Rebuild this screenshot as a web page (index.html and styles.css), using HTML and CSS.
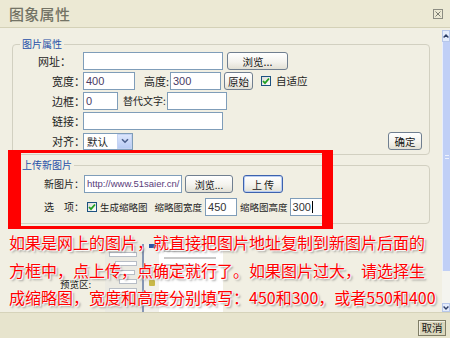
FILE: index.html
```html
<!DOCTYPE html>
<html lang="zh-CN">
<head>
<meta charset="utf-8">
<title>图象属性</title>
<link rel="stylesheet" href="styles.css">
</head>
<body>
<div class="dialog">
  <header class="titlebar">
    <span class="title">图象属性</span>
    <span class="close"><svg width="10" height="10" viewBox="0 0 10 10"><rect x="0.5" y="0.5" width="9" height="9" fill="none" stroke="#8c8c82"/><path d="M2.5 2.5 L7.5 7.5 M7.5 2.5 L2.5 7.5" stroke="#7c7c72" stroke-width="1"/></svg></span>
  </header>
  <div class="main">
    <div class="content">
      <fieldset class="group g1">
        <legend>图片属性</legend>
        <div class="rows">
          <div class="row">
            <span class="lbl lbl-url">网址：</span>
            <span class="input w-url"></span>
            <span class="btn b-browse">浏览...</span>
          </div>
          <div class="row">
            <span class="lbl">宽度：</span>
            <span class="input w-400">400</span>
            <span class="txt t-h">高度:</span>
            <span class="input w-300">300</span>
            <span class="btn b-orig">原始</span>
            <span class="cb cb-auto"><svg width="8" height="8" viewBox="0 0 8 8"><path d="M1 4 L3 6.2 L7 1.5" fill="none" stroke="#21a121" stroke-width="1.8"/></svg></span>
            <span class="txt t-auto">自适应</span>
          </div>
          <div class="row">
            <span class="lbl">边框：</span>
            <span class="input w-0">0</span>
            <span class="txt t-alt">替代文字:</span>
            <span class="input w-alt"></span>
          </div>
          <div class="row">
            <span class="lbl">链接：</span>
            <span class="input w-url"></span>
          </div>
          <div class="row">
            <span class="lbl">对齐：</span>
            <span class="select"><span class="sel-val">默认</span><span class="sel-arr"><svg width="8" height="6" viewBox="0 0 8 6"><path d="M1 1.2 L4 4.2 L7 1.2" fill="none" stroke="#4a5f8c" stroke-width="1.6"/></svg></span></span>
            <span class="btn b-ok">确定</span>
          </div>
        </div>
      </fieldset>
      <fieldset class="group g2">
        <legend>上传新图片</legend>
        <div class="rows rows2">
          <div class="row">
            <span class="lbl2">新图片：</span>
            <span class="input w-file">http://www.51saier.cn/</span>
            <span class="btn b-browse2">浏览...</span>
            <span class="btn b-up">上 传</span>
          </div>
          <div class="row">
            <span class="lbl2">选　项：</span>
            <span class="cb cb-thumb"><svg width="8" height="8" viewBox="0 0 8 8"><path d="M1 4 L3 6.2 L7 1.5" fill="none" stroke="#21a121" stroke-width="1.8"/></svg></span>
            <span class="txt2 t-gen">生成缩略图</span>
            <span class="txt2 t-tw">缩略图宽度</span>
            <span class="input w-tw">450</span>
            <span class="txt2 t-th">缩略图高度</span>
            <span class="input w-th">300<span class="caret"></span></span>
          </div>
        </div>
      </fieldset>
      <div class="preview">
        <span class="pv-label">预览区:</span>
        <div class="thumb">
          <div class="t-left">
            <span class="t-bar tb1"></span>
            <span class="t-bar tb2"></span>
            <span class="t-bar tb3"></span>
            <span class="t-bar tb4"></span>
            <span class="t-bar tb5"></span>
          </div>
          <div class="t-div"></div>
          <div class="t-mid">
            <span class="t-blue"></span>
            <span class="t-icon"></span>
          </div>
          <div class="t-right">
            <span class="t-line l1"></span>
            <span class="t-line l2"></span>
            <span class="t-line l3"></span>
          </div>
        </div>
      </div>
    </div>
    <div class="scroll">
      <div class="sb-up"><svg width="6" height="4" viewBox="0 0 6 4"><path d="M0.6 3.4 L3 1 L5.4 3.4" fill="none" stroke="#2c3e66" stroke-width="1.4"/></svg></div>
      <div class="sb-thumb"><span class="grip"></span></div>
      <div class="sb-track"></div>
      <div class="sb-down"><svg width="6" height="4" viewBox="0 0 6 4"><path d="M0.6 0.6 L3 3 L5.4 0.6" fill="none" stroke="#2c3e66" stroke-width="1.4"/></svg></div>
    </div>
  </div>
  <footer class="footer">
    <span class="btn-cancel">取消</span>
  </footer>
</div>
<div class="mark"></div>
<div class="note">
  <span class="note-line">如果是网上的图片，就直接把图片地址复制到新图片后面的</span>
  <span class="note-line">方框中，点上传，点确定就行了。如果图片过大，请选择生</span>
  <span class="note-line">成缩略图，宽度和高度分别填写：450和300，或者550和400</span>
</div>
</body>
</html>
```

FILE: styles.css
```css
* { box-sizing: border-box; }
html, body { margin: 0; padding: 0; }
body {
  width: 450px;
  height: 338px;
  overflow: hidden;
  background: #f1efe3;
  font-family: "Noto Sans CJK SC", sans-serif;
  color: #1e1e1e;
  position: relative;
}
.dialog { display: flex; flex-direction: column; height: 338px; }

.titlebar {
  height: 28px;
  flex: none;
  display: flex;
  align-items: center;
  justify-content: space-between;
  padding: 0 7px 0 9px;
  background: #ece9d4;
  border-bottom: 1px solid #d4d1b7;
}
.title { font-size: 15px; line-height: 1; color: #737365; font-weight: 500; letter-spacing: 0.3px; }
.close { display: flex; }

.main { height: 284px; flex: none; display: flex; overflow: hidden; }
.content { flex: 1; min-width: 0; overflow: hidden; }

.group {
  margin: 10px 12px 0 12px;
  padding: 2px 7px 4px 0;
  border: 1px solid #d2d0c1;
  border-radius: 4px;
  min-width: 0;
}
.group legend {
  margin-left: 7px;
  padding: 0 2px;
  font-size: 10px;
  line-height: 12px;
  color: #1f4fa8;
}
.g2 { margin-top: 4px; padding: 4px 7px 7px 0; }
.rows { display: flex; flex-direction: column; gap: 2px; }
.rows2 { gap: 5px; }
.row { display: flex; align-items: center; height: 18px; }

.lbl {
  flex: none;
  width: 72px;
  margin-right: -2px;
  text-align: right;
  font-size: 11px;
  line-height: 18px;
  white-space: nowrap;
}
.lbl-url { padding-right: 14px; }
.lbl2 {
  flex: none;
  width: 71px;
  text-align: right;
  font-size: 10px;
  line-height: 18px;
  white-space: nowrap;
}
.txt { flex: none; white-space: nowrap; line-height: 18px; }
.t-h { margin-left: 9px; width: 26px; font-size: 11px; }
.t-alt { margin-left: 5px; width: 44px; font-size: 10px; }
.t-auto { margin-left: 5px; font-size: 10.5px; }
.txt2 { flex: none; white-space: nowrap; font-size: 9.5px; line-height: 18px; }
.t-gen { margin-left: 3px; }
.t-tw { margin-left: 7px; }
.t-th { margin-left: 3px; }

.input {
  flex: none;
  height: 18px;
  border: 1px solid #7f9db9;
  background: #fff;
  font-family: "Liberation Sans", sans-serif;
  font-size: 11px;
  line-height: 16px;
  color: #4b3b63;
  padding: 0 2px;
  overflow: hidden;
  white-space: nowrap;
}
.w-url { width: 140px; }
.w-400 { width: 52px; }
.w-300 { width: 51px; }
.w-0 { width: 35px; }
.w-alt { width: 60px; }
.w-file { width: 98px; font-size: 9.5px; color: #5a3d7a; padding-left: 2px; }
.w-tw { width: 32px; margin-left: 3px; color: #333; }
.w-th { width: 40px; margin-left: 2px; color: #333; }
.caret { display: inline-block; width: 1px; height: 12px; background: #000; vertical-align: -2px; margin-left: 1px; }

.btn {
  flex: none;
  display: flex;
  align-items: center;
  justify-content: center;
  height: 18px;
  border: 1px solid #707f90;
  border-radius: 3px;
  background: linear-gradient(#ffffff, #f4f3ee 55%, #e2e0d5);
  font-size: 10.5px;
  color: #151515;
  white-space: nowrap;
}
.b-browse { margin-left: 4px; width: 61px; }
.b-orig { margin-left: 3px; width: 29px; }
.b-ok { margin-left: auto; width: 34px; }
.b-browse2 { margin-left: 3px; width: 48px; font-size: 10px; }
.b-up {
  margin-left: 10px;
  width: 40px;
  border-color: #3d62ad;
  box-shadow: inset 0 0 0 1px #b9cdf3;
  font-size: 10px;
}

.cb {
  flex: none;
  width: 10px;
  height: 10px;
  border: 1px solid #1d5281;
  background: linear-gradient(135deg, #dcdcd6, #ffffff);
  display: flex;
  align-items: center;
  justify-content: center;
}
.cb-auto { margin-left: 8px; }
.cb-thumb { margin-left: 3px; }

.select {
  flex: none;
  width: 50px;
  height: 17px;
  border: 1px solid #7f9db9;
  background: #fff;
  display: flex;
}
.sel-val { flex: 1; font-size: 10.5px; line-height: 15px; padding-left: 3px; }
.sel-arr {
  width: 15px;
  background: linear-gradient(#dce6fc, #b8cbf4);
  border: 1px solid #c4d3f3;
  display: flex;
  align-items: center;
  justify-content: center;
}

.preview { display: flex; align-items: flex-start; margin-top: 20px; padding-left: 60px; }
.pv-label { flex: none; width: 45px; margin-top: 35px; font-size: 9.5px; line-height: 10px; color: #1a1a1a; }
.thumb { flex: none; width: 118px; height: 70px; display: flex; background: #fff; }
.t-left { width: 37px; background: #ebeae2; display: flex; flex-direction: column; gap: 4px; padding: 8px 3px 0 4px; }
.t-bar { display: block; height: 5px; background: #fff; border: 1px solid #b7bdc6; }
.tb1 { width: 28px; }
.tb2 { width: 22px; margin-left: 6px; }
.tb3 { width: 26px; }
.tb4 { width: 18px; margin-left: 10px; }
.tb5 { width: 28px; }
.t-div { width: 2px; background: #8595b4; }
.t-mid { width: 15px; background: #f2f1ec; display: flex; flex-direction: column; align-items: center; }
.t-blue { width: 8px; height: 4px; background: #2c55a8; margin-left: 2px; }
.t-icon { width: 6px; height: 6px; margin-top: 32px; background: #c9b94a; border-radius: 1px; }
.t-right { flex: 1; display: flex; flex-direction: column; gap: 5px; padding: 6px 6px 0 5px; }
.t-line { display: block; height: 2px; background: #c9c9c9; }
.l1 { width: 40px; }
.l2 { width: 52px; }
.l3 { width: 30px; }

.scroll { width: 8px; flex: none; display: flex; flex-direction: column; padding-top: 2px; }
.sb-up {
  height: 12px;
  background: #e4ecfc;
  border: 1px solid #b7c7ea;
  display: flex;
  align-items: center;
  justify-content: center;
}
.sb-thumb {
  height: 229px;
  background: #c0cff6;
  border-left: 1px solid #e8eefc;
  display: flex;
  align-items: center;
  justify-content: center;
}
.grip { width: 4px; height: 4px; border-top: 1px solid #eef2fd; border-bottom: 1px solid #eef2fd; }
.sb-track { flex: 1; background: #f4f4ef; }
.sb-down {
  height: 9px;
  background: #e4ecfc;
  border: 1px solid #b7c7ea;
  display: flex;
  align-items: center;
  justify-content: center;
}

.footer {
  flex: 1;
  background: #e7e4cd;
  border-top: 1px solid #d6d3ba;
  display: flex;
  justify-content: flex-end;
  align-items: flex-start;
  padding: 7px 4px 0 0;
}
.btn-cancel {
  width: 28px;
  height: 16px;
  border: 1px solid #7f7d66;
  background: #dad6bb;
  box-shadow: inset 1px 1px 0 #f1efe2;
  font-size: 10.5px;
  line-height: 14px;
  text-align: center;
  color: #151515;
}

.mark {
  position: absolute;
  left: 8px;
  top: 150px;
  width: 325px;
  height: 79px;
  border-style: solid;
  border-color: #ff0000;
  border-width: 3px 11px 3px 13px;
}
.note {
  position: absolute;
  left: 9px;
  top: 234px;
  font-size: 16px;
  line-height: 16px;
  color: #ff0000;
  white-space: nowrap;
  text-shadow: 0 0 1px #fff, 0 0 2px #fff, 1px 1px 1px #fff, 2px 2px 2px rgba(80, 80, 80, 0.6);
}
.note-line { display: block; height: 16px; margin-bottom: 11.5px; }
```
